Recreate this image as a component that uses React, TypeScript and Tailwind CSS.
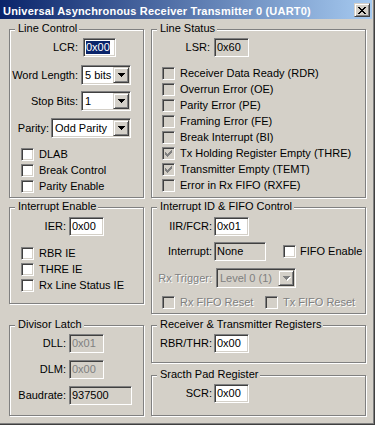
import React from "react";

const SUNKEN =
  "border border-t-[#808080] border-l-[#808080] border-b-white border-r-white shadow-[inset_1px_1px_0_#404040,inset_-1px_-1px_0_#d4d0c8]";
const RAISED =
  "border border-t-[#d4d0c8] border-l-[#d4d0c8] border-b-[#404040] border-r-[#404040] shadow-[inset_1px_1px_0_#fff,inset_-1px_-1px_0_#808080]";
const EMBOSS = "text-[#808080] [text-shadow:1px_1px_0_#fff]";

function Check({ checked = false, grey = false }: { checked?: boolean; grey?: boolean }) {
  const c = grey ? "#808080" : "#000";
  return (
    <div
      className={`${SUNKEN} w-[13px] h-[13px] shrink-0 flex items-center justify-center ${
        grey ? "bg-[#d4d0c8]" : "bg-white"
      }`}
    >
      {checked && (
        <svg width="7" height="7" viewBox="0 0 7 7" shapeRendering="crispEdges">
          <g fill={c}>
            <rect x="6" y="0" width="1" height="1" />
            <rect x="5" y="1" width="2" height="1" />
            <rect x="0" y="2" width="1" height="1" />
            <rect x="4" y="2" width="3" height="1" />
            <rect x="0" y="3" width="2" height="1" />
            <rect x="3" y="3" width="3" height="1" />
            <rect x="0" y="4" width="5" height="1" />
            <rect x="1" y="5" width="3" height="1" />
            <rect x="2" y="6" width="1" height="1" />
          </g>
        </svg>
      )}
    </div>
  );
}

function CheckRow({
  label,
  checked = false,
  grey = false,
  emboss = false,
  cls = "",
}: {
  label: string;
  checked?: boolean;
  grey?: boolean;
  emboss?: boolean;
  cls?: string;
}) {
  return (
    <div className={`flex items-center h-[16px] ${cls}`}>
      <Check checked={checked} grey={grey} />
      <span className={`ml-[5px] whitespace-nowrap ${emboss ? EMBOSS : ""}`}>{label}</span>
    </div>
  );
}

function Arrow({ disabled = false }: { disabled?: boolean }) {
  const rows = (fill: string, dx: number, dy: number) => (
    <g fill={fill}>
      <rect x={0 + dx} y={0 + dy} width="7" height="1" />
      <rect x={1 + dx} y={1 + dy} width="5" height="1" />
      <rect x={2 + dx} y={2 + dy} width="3" height="1" />
      <rect x={3 + dx} y={3 + dy} width="1" height="1" />
    </g>
  );
  return (
    <svg width="8" height="5" viewBox="0 0 8 5" shapeRendering="crispEdges">
      {disabled && rows("#fff", 1, 1)}
      {rows(disabled ? "#808080" : "#000", 0, 0)}
    </svg>
  );
}

function Select({ cls, text, disabled = false }: { cls: string; text: string; disabled?: boolean }) {
  return (
    <div
      className={`${SUNKEN} ${cls} h-[20px] p-[1px] flex ${
        disabled ? "bg-[#d4d0c8] text-[#808080]" : "bg-white"
      }`}
    >
      <div className="flex-1 pl-[2px] flex items-center whitespace-nowrap overflow-hidden">{text}</div>
      <div className={`${RAISED} w-[16px] h-full flex items-center justify-center bg-[#d4d0c8] pl-[1px]`}>
        <Arrow disabled={disabled} />
      </div>
    </div>
  );
}

function Field({
  cls,
  children,
  grey = false,
  disabled = false,
}: {
  cls: string;
  children: React.ReactNode;
  grey?: boolean;
  disabled?: boolean;
}) {
  return (
    <div
      className={`${SUNKEN} ${cls} h-[19px] flex items-center pl-[2px] whitespace-nowrap ${
        grey || disabled ? "bg-[#d4d0c8]" : "bg-white"
      } ${disabled ? "text-[#808080]" : "text-black"}`}
    >
      {children}
    </div>
  );
}

function Group({ title, cls, children }: { title: string; cls: string; children?: React.ReactNode }) {
  return (
    <div className={`relative border border-[#808080] shadow-[inset_1px_1px_0_#fff,1px_1px_0_#fff] ${cls}`}>
      <span className="absolute -top-[8px] left-[5px] pl-[3px] pr-[2px] bg-[#d4d0c8] whitespace-nowrap">
        {title}
      </span>
      {children}
    </div>
  );
}

export default function App() {
  return (
    <div className="w-[375px] h-[425px] bg-[#d4d0c8] font-['Liberation_Sans',Arial,sans-serif] text-[11px] leading-[13px] text-black shadow-[inset_-1px_-1px_0_#404040,inset_-2px_-2px_0_#808080] overflow-hidden select-none">
      {/* Title bar */}
      <div className="flex items-start h-[19px] mr-[3px] pl-[3px] pr-[2px] bg-[linear-gradient(to_right,#0a246a,#a6caf0)]">
        <div className="flex-1 pt-[5px] font-bold text-white whitespace-nowrap tracking-[0.2px]">
          Universal Asynchronous Receiver Transmitter 0 (UART0)
        </div>
        <div className={`${RAISED} mt-[3px] w-[16px] h-[14px] bg-[#d4d0c8] flex items-center justify-center`}>
          <svg width="8" height="7" viewBox="0 0 8 7" shapeRendering="crispEdges">
            <g fill="#000">
              <rect x="0" y="0" width="2" height="1" />
              <rect x="6" y="0" width="2" height="1" />
              <rect x="1" y="1" width="2" height="1" />
              <rect x="5" y="1" width="2" height="1" />
              <rect x="2" y="2" width="4" height="1" />
              <rect x="3" y="3" width="2" height="1" />
              <rect x="2" y="4" width="4" height="1" />
              <rect x="1" y="5" width="2" height="1" />
              <rect x="5" y="5" width="2" height="1" />
              <rect x="0" y="6" width="2" height="1" />
              <rect x="6" y="6" width="2" height="1" />
            </g>
          </svg>
        </div>
      </div>

      {/* Body */}
      <div className="flex gap-[7px] pl-[9px] pt-[10px]">
        {/* Left column */}
        <div className="flex flex-col w-[135px] shrink-0">
          <Group title="Line Control" cls="h-[169px]">
            <div className="flex flex-col pt-[8px]">
              <div className="flex items-center gap-[5px]">
                <span className="w-[68px] text-right">LCR:</span>
                <Field cls="w-[33px]">
                  <span className="bg-[#0a246a] text-white">0x00</span>
                </Field>
              </div>
              <div className="flex items-center gap-[3px] mt-[8px]">
                <span className="w-[68px] text-right whitespace-nowrap">Word Length:</span>
                <Select cls="w-[50px]" text="5 bits" />
              </div>
              <div className="flex items-center gap-[3px] mt-[6px]">
                <span className="w-[68px] text-right">Stop Bits:</span>
                <Select cls="w-[50px]" text="1" />
              </div>
              <div className="flex items-center gap-[2px] mt-[7px]">
                <span className="w-[39px] text-right">Parity:</span>
                <Select cls="w-[80px]" text="Odd Parity" />
              </div>
              <div className="flex flex-col mt-[8px] pl-[11px]">
                <CheckRow label="DLAB" />
                <CheckRow label="Break Control" />
                <CheckRow label="Parity Enable" />
              </div>
            </div>
          </Group>

          <Group title="Interrupt Enable" cls="h-[97px] mt-[9px]">
            <div className="flex flex-col pt-[9px]">
              <div className="flex items-center gap-[3px]">
                <span className="w-[56px] text-right">IER:</span>
                <Field cls="w-[35px]">0x00</Field>
              </div>
              <div className="flex flex-col mt-[9px] pl-[11px]">
                <CheckRow label="RBR IE" />
                <CheckRow label="THRE IE" />
                <CheckRow label="Rx Line Status IE" />
              </div>
            </div>
          </Group>

          <Group title="Divisor Latch" cls="h-[91px] mt-[21px]">
            <div className="flex flex-col pt-[8px]">
              <div className="flex items-center gap-[3px]">
                <span className="w-[56px] text-right">DLL:</span>
                <Field cls="w-[35px]" disabled>
                  0x01
                </Field>
              </div>
              <div className="flex items-center gap-[3px] mt-[7px]">
                <span className="w-[56px] text-right">DLM:</span>
                <Field cls="w-[35px]" disabled>
                  0x00
                </Field>
              </div>
              <div className="flex items-center gap-[3px] mt-[7px]">
                <span className="w-[56px] text-right">Baudrate:</span>
                <Field cls="w-[63px]" grey>
                  937500
                </Field>
              </div>
            </div>
          </Group>
        </div>

        {/* Right column */}
        <div className="flex flex-col w-[215px] shrink-0">
          <Group title="Line Status" cls="h-[169px]">
            <div className="flex flex-col pt-[8px]">
              <div className="flex items-center gap-[4px]">
                <span className="w-[58px] text-right">LSR:</span>
                <Field cls="w-[35px]" grey>
                  0x60
                </Field>
              </div>
              <div className="flex flex-col mt-[8px] pl-[10px]">
                <CheckRow label="Receiver Data Ready (RDR)" grey />
                <CheckRow label="Overrun Error (OE)" grey />
                <CheckRow label="Parity Error (PE)" grey />
                <CheckRow label="Framing Error (FE)" grey />
                <CheckRow label="Break Interrupt (BI)" grey />
                <CheckRow label="Tx Holding Register Empty (THRE)" grey checked />
                <CheckRow label="Transmitter Empty (TEMT)" grey checked />
                <CheckRow label="Error in Rx FIFO (RXFE)" grey />
              </div>
            </div>
          </Group>

          <Group title="Interrupt ID & FIFO Control" cls="h-[107px] mt-[9px]">
            <div className="flex flex-col pt-[9px]">
              <div className="flex items-center gap-[2px]">
                <span className="w-[60px] text-right">IIR/FCR:</span>
                <Field cls="w-[35px]">0x01</Field>
              </div>
              <div className="flex items-center mt-[6px]">
                <span className="w-[60px] text-right">Interrupt:</span>
                <Field cls="w-[52px] ml-[2px]" grey>
                  None
                </Field>
                <div className="ml-[17px] flex items-center">
                  <Check />
                  <span className="ml-[4px]">FIFO Enable</span>
                </div>
              </div>
              <div className="flex items-center gap-[4px] mt-[7px]">
                <span className={`w-[60px] text-right whitespace-nowrap ${EMBOSS}`}>Rx Trigger:</span>
                <Select cls="w-[80px]" text="Level 0 (1)" disabled />
              </div>
              <div className="flex items-center mt-[6px] pl-[10px]">
                <CheckRow label="Rx FIFO Reset" grey emboss cls="w-[103px]" />
                <CheckRow label="Tx FIFO Reset" grey emboss />
              </div>
            </div>
          </Group>

          <Group title="Receiver & Transmitter Registers" cls="h-[38px] mt-[11px]">
            <div className="flex items-center gap-[2px] pt-[8px]">
              <span className="w-[60px] text-right">RBR/THR:</span>
              <Field cls="w-[35px]">0x00</Field>
            </div>
          </Group>

          <Group title="Sracth Pad Register" cls="h-[41px] mt-[12px]">
            <div className="flex items-center gap-[2px] pt-[8px]">
              <span className="w-[60px] text-right">SCR:</span>
              <Field cls="w-[35px]">0x00</Field>
            </div>
          </Group>
        </div>
      </div>
    </div>
  );
}
